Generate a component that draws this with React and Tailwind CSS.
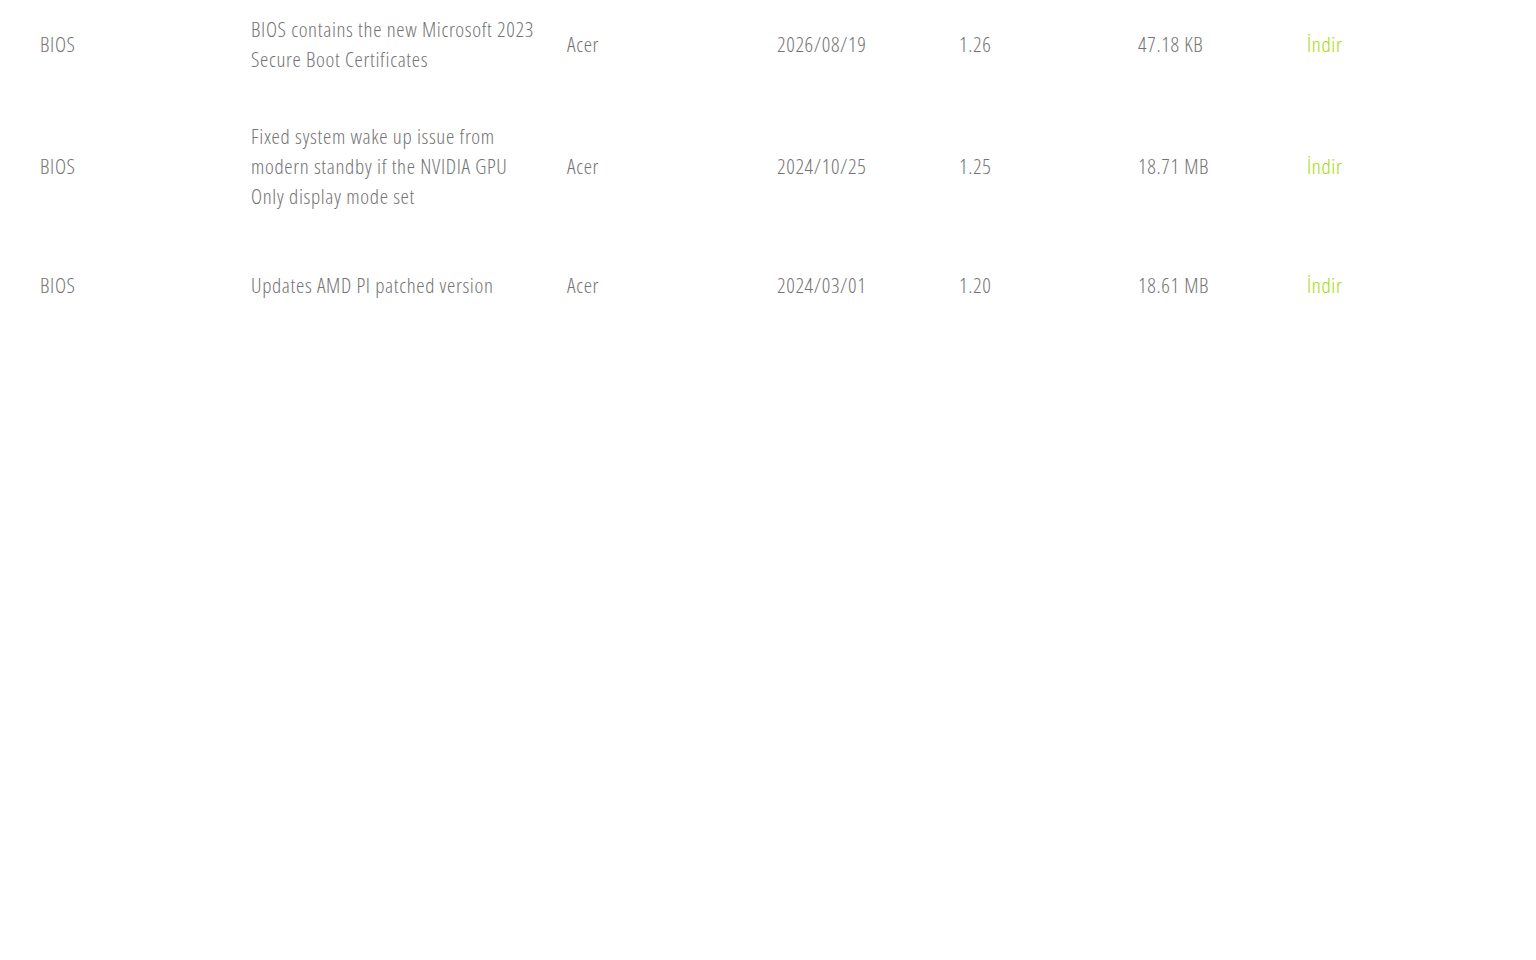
import React from "react";

const rows = [
  {
    type: "BIOS",
    desc: "BIOS contains the new Microsoft 2023 Secure Boot Certificates",
    os: "Acer",
    date: "2026/08/19",
    version: "1.26",
    size: "47.18 KB",
    h: "h-[91px]",
  },
  {
    type: "BIOS",
    desc: "Fixed system wake up issue from modern standby if the NVIDIA GPU Only display mode set",
    os: "Acer",
    date: "2024/10/25",
    version: "1.25",
    size: "18.71 MB",
    h: "h-[154px]",
  },
  {
    type: "BIOS",
    desc: "Updates AMD PI patched version",
    os: "Acer",
    date: "2024/03/01",
    version: "1.20",
    size: "18.61 MB",
    h: "h-[84px]",
  },
];

export default function App() {
  return (
    <div
      className="min-h-screen bg-white pl-[40px] text-[21px] leading-[30px] font-light tracking-[0.65px] text-[#737373]"
      style={{ fontFamily: '"Open Sans", "DejaVu Sans Condensed", sans-serif', fontStretch: "75%" }}
    >
      <div className="-mt-[2px]">
        {rows.map((r, i) => (
          <div
            key={i}
            className={`grid grid-cols-[211px_316px_210px_182px_179px_169px_1fr] items-center ${r.h}`}
          >
            <div>{r.type}</div>
            <div className="pr-[28px]">{r.desc}</div>
            <div>{r.os}</div>
            <div>{r.date}</div>
            <div>{r.version}</div>
            <div>{r.size}</div>
            <div>
              <a href="#" className="text-[#a0dc00]">
                İndir
              </a>
            </div>
          </div>
        ))}
      </div>
    </div>
  );
}
